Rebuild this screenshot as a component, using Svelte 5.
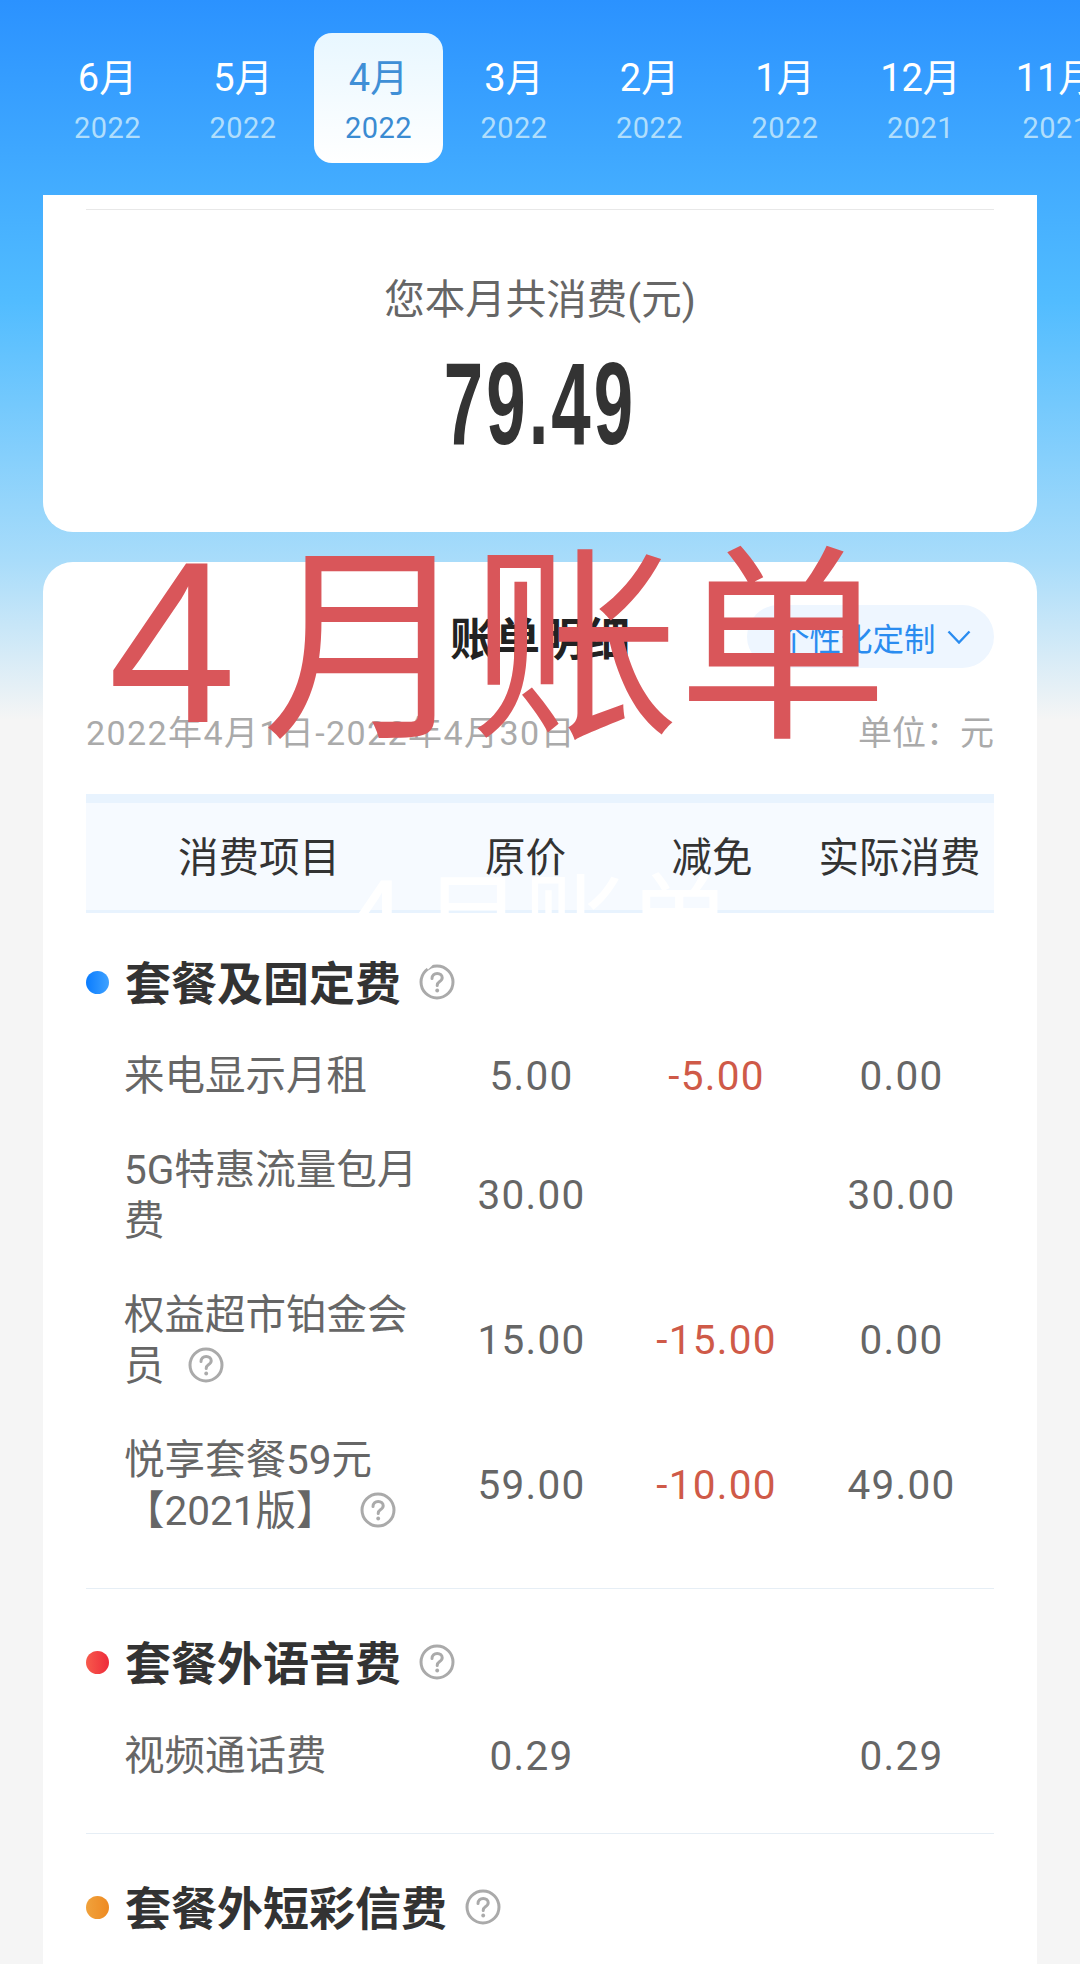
<script lang="ts">
	const months = [
		{ m: '6月', y: '2022' },
		{ m: '5月', y: '2022' },
		{ m: '4月', y: '2022', active: true },
		{ m: '3月', y: '2022' },
		{ m: '2月', y: '2022' },
		{ m: '1月', y: '2022' },
		{ m: '12月', y: '2021' },
		{ m: '11月', y: '2021' }
	];

	const sections = [
		{
			title: '套餐及固定费',
			dot: 'blue',
			rows: [
				{ name: '来电显示月租', price: '5.00', off: '-5.00', real: '0.00' },
				{ name: '5G特惠流量包月费', price: '30.00', off: '', real: '30.00' },
				{ name: '权益超市铂金会员', help: true, price: '15.00', off: '-15.00', real: '0.00' },
				{ name: '悦享套餐59元【2021版】', help: true, price: '59.00', off: '-10.00', real: '49.00' }
			]
		},
		{
			title: '套餐外语音费',
			dot: 'red',
			rows: [{ name: '视频通话费', price: '0.29', off: '', real: '0.29' }]
		},
		{ title: '套餐外短彩信费', dot: 'orange', rows: [] }
	];
</script>

{#snippet help()}
	<svg class="help" viewBox="0 0 36 36" width="36" height="36" fill="none" stroke="#aaa">
		<circle cx="18" cy="18" r="16" stroke-width="3" />
		<path d="M13 14.500c0-3 2.200-5 5.200-5s5 1.800 5 4.300c0 2-1.200 3-2.800 4-1.500 1-2.200 1.800-2.200 3.700" stroke-width="3" stroke-linecap="round" />
		<circle cx="18.200" cy="26.500" r="1.900" fill="#aaa" stroke="none" />
	</svg>
{/snippet}

{#snippet mark()}
	<b>4</b><span class="mark-month">月</span><span class="mark-zhang">账</span>单
{/snippet}

<div class="page">
	<nav class="tabs">
		{#each months as t}
			<div class="tab" class:active={t.active}>
				<span class="month">{t.m}</span>
				<span class="year">{t.y}</span>
			</div>
		{/each}
	</nav>

	<section class="card total">
		<div class="rule"></div>
		<p class="total-label">您本月共消费(元)</p>
		<p class="total-num">79.49</p>
	</section>

	<section class="card detail">
		<header class="detail-head">
			<h2>账单明细</h2>
			<div class="custom">
				个性化定制
				<svg viewBox="0 0 24 14" width="24" height="14" fill="none" stroke="#2a8cf0" stroke-width="2.400"><path d="M1.500 1.500l10.500 11 10.500-11" /></svg>
			</div>
		</header>
		<div class="range">
			<span class="dates">2022年4月1日-2022年4月30日</span>
			<span>单位：元</span>
		</div>

		<div class="thead">
			<span>消费项目</span>
			<span>原价</span>
			<span>减免</span>
			<span>实际消费</span>
		</div>

		{#each sections as s, i}
			<div class="group" class:first={i === 0}>
				<h3 class="group-title">
					<i class="dot {s.dot}"></i>
					<span class="group-name">{s.title}</span>
					{@render help()}
				</h3>
				{#each s.rows as r}
					<div class="row">
						<div class="name">
							{r.name}
							{#if r.help}<span class="name-help">{@render help()}</span>{/if}
						</div>
						<div class="val">{r.price}</div>
						<div class="val off">{r.off}</div>
						<div class="val">{r.real}</div>
					</div>
				{/each}
			</div>
		{/each}
	</section>

	<div class="ghost">{@render mark()}</div>
	<div class="stamp">{@render mark()}</div>
</div>

<style>
	:global(body) {
		margin: 0;
		background: #f5f5f5;
	}

	.page {
		position: relative;
		width: 1080px;
		height: 1964px;
		overflow: hidden;
		font-family: Roboto, 'Noto Sans CJK SC', sans-serif;
		background: linear-gradient(180deg, #2b92ff 0, #51bcff 300px, #a8dcfa 560px, #f5f5f5 720px);
	}

	.tabs {
		display: flex;
		gap: 6.500px;
		padding: 33px 0 32px 43px;
	}

	.tab {
		flex: 0 0 129px;
		height: 130px;
		box-sizing: border-box;
		padding-top: 2px;
		border-radius: 18px;
		display: flex;
		flex-direction: column;
		align-items: center;
		justify-content: center;
		gap: 7px;
		color: #fff;
	}

	.tab.active {
		background: linear-gradient(180deg, #e8f7ff, #fff);
		color: #3f8fd6;
	}

	.month {
		font-size: 38px;
		line-height: 50px;
	}

	.year {
		font-size: 29px;
		line-height: 36px;
		letter-spacing: 0.500px;
		color: #b0defc;
	}

	.active .year {
		color: #3a8bd2;
	}

	.card {
		margin: 0 43px;
		background: #fff;
	}

	.total {
		height: 337px;
		padding: 14px 43px 0;
		box-sizing: border-box;
		border-radius: 0 0 30px 30px;
		margin-bottom: 30px;
		text-align: center;
	}

	.rule {
		height: 1px;
		background: #e8e8e8;
	}

	.total-label {
		margin: 64px 0 0;
		font-size: 40.500px;
		line-height: 52px;
		color: #666;
	}

	.total-num {
		margin: 23px 0 0;
		font-family: 'Liberation Sans', sans-serif;
		font-weight: 700;
		font-size: 116px;
		line-height: 110px;
		letter-spacing: 5px;
		color: #333;
		transform: scaleX(0.61);
	}

	.detail {
		border-radius: 30px 30px 0 0;
		padding: 43px 43px 0;
		height: 1402px;
		box-sizing: border-box;
	}

	.detail-head {
		position: relative;
		height: 63px;
		display: flex;
		justify-content: flex-end;
		align-items: center;
	}

	.detail-head h2 {
		position: absolute;
		left: 0;
		right: 0;
		margin: 0;
		text-align: center;
		font-size: 45px;
		color: #222;
	}

	.custom {
		position: relative;
		width: 247px;
		height: 63px;
		box-sizing: border-box;
		padding: 0 23px 0 31px;
		border-radius: 32px;
		background: #eef6ff;
		color: #2a8cf0;
		font-size: 31.500px;
		display: flex;
		align-items: center;
		justify-content: space-between;
		white-space: nowrap;
	}

	.range {
		display: flex;
		justify-content: space-between;
		margin-top: 44px;
		font-size: 34px;
		line-height: 42px;
		color: #aaa;
	}

	.dates {
		letter-spacing: 1.400px;
	}

	.thead {
		display: grid;
		grid-template-columns: 346px 187px 186px 189px;
		align-items: center;
		height: 119px;
		margin-top: 40px;
		padding-bottom: 4px;
		box-sizing: border-box;
		background: #f6faff;
		border-top: 9px solid #e8f3fe;
		border-bottom: 3px solid #e8f3fe;
		font-size: 40.500px;
		color: #333;
		text-align: center;
	}

	.group {
		padding: 43px 0 30px;
		border-bottom: 1px solid #e6eef5;
	}

	.group.first {
		padding-top: 39px;
	}

	.group-title {
		display: flex;
		align-items: center;
		height: 60px;
		margin: 0 0 17px;
		font-size: 46px;
		font-weight: 700;
		color: #333;
	}

	.group-name {
		margin-bottom: 4px;
	}

	.dot {
		width: 23px;
		height: 23px;
		border-radius: 50%;
		margin-right: 16px;
	}

	.dot.blue {
		background: linear-gradient(90deg, #0a7cff, #3fa2ff);
	}

	.dot.red {
		background: linear-gradient(90deg, #f75a4c, #ee2b3b);
	}

	.dot.orange {
		background: linear-gradient(90deg, #f0a23c, #ee8a22);
	}

	.help {
		margin-left: 18px;
		flex: none;
		vertical-align: -3px;
	}

	.row {
		display: grid;
		grid-template-columns: 353px 185px 185px 185px;
		align-items: center;
		padding: 21.500px 0;
	}

	.name {
		padding: 0 16px 0 38px;
		font-size: 40.500px;
		line-height: 51px;
		color: #666;
		word-break: break-all;
	}

	.name-help {
		margin-left: -5px;
	}

	.val {
		font-size: 40.500px;
		line-height: 51px;
		color: #666;
		text-align: center;
		letter-spacing: 1.300px;
	}

	.val.off {
		color: #cf5a48;
	}

	.ghost,
	.stamp {
		position: absolute;
		white-space: nowrap;
		font-family: 'Liberation Sans', 'Noto Sans CJK SC', sans-serif;
	}

	.ghost b,
	.stamp b {
		font-weight: 400;
		font-size: 1.100em;
		margin-right: 0.110em;
	}

	.mark-month {
		margin-right: -0.010em;
	}

	.mark-zhang {
		margin-right: -0.010em;
	}

	.ghost {
		left: 342px;
		top: 850px;
		font-size: 105px;
		line-height: 140px;
		color: #fff;
	}

	.stamp {
		left: 108px;
		top: 492px;
		font-size: 210px;
		line-height: 300px;
		color: #d9565a;
	}
</style>
